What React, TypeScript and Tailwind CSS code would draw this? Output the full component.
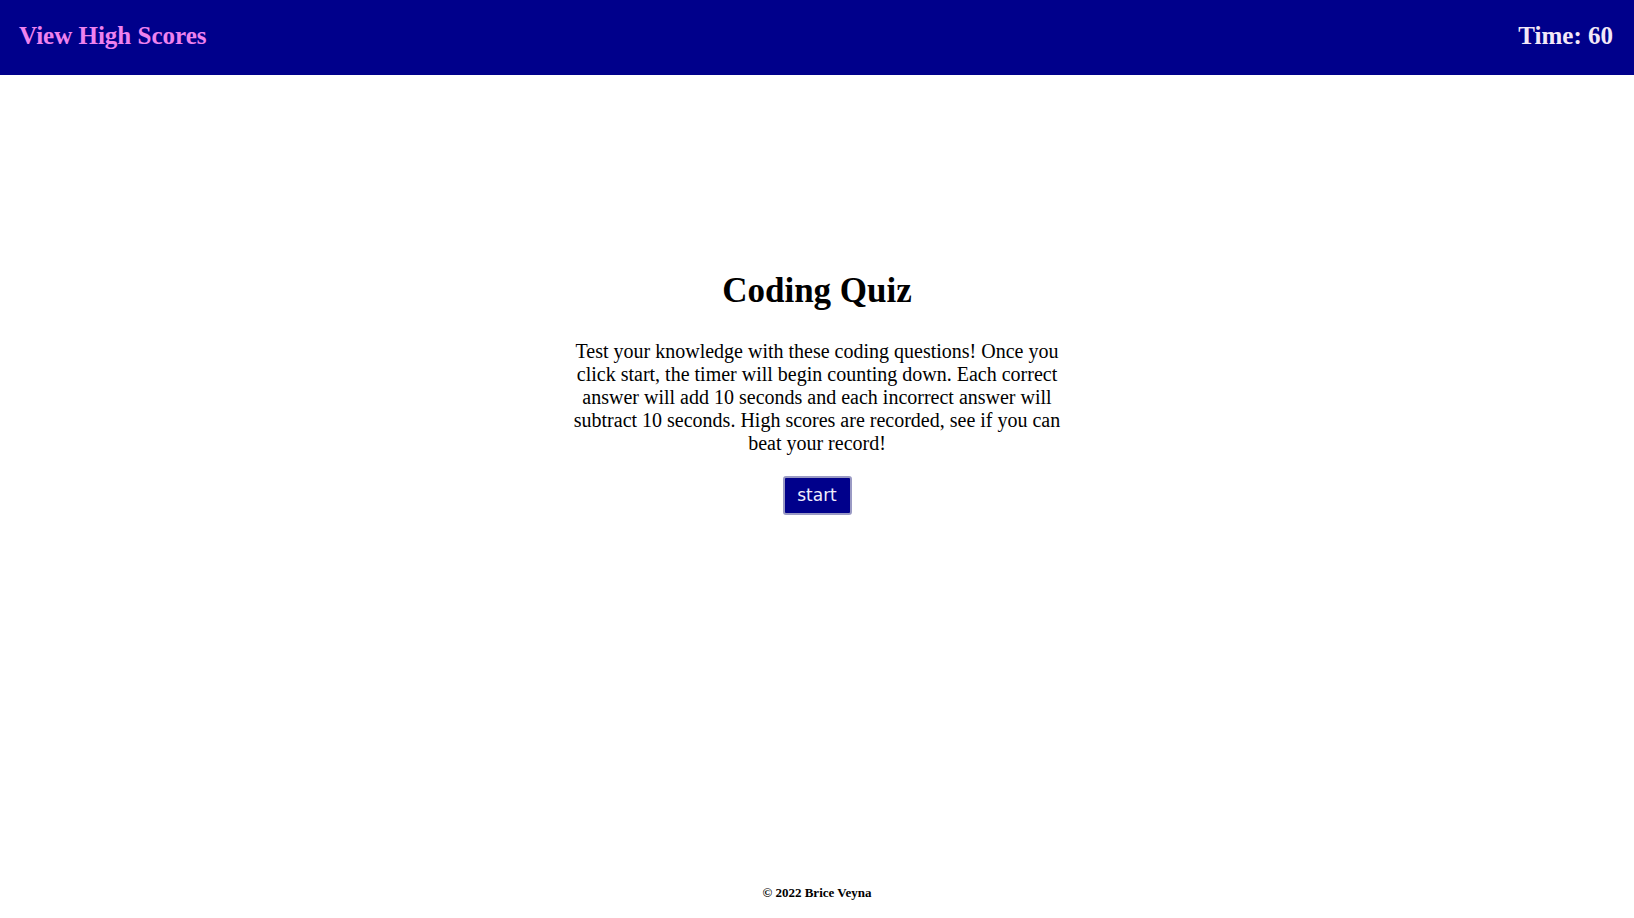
import React from "react";

export default function App() {
  return (
    <div className="min-h-screen flex flex-col bg-white text-black">
      <header className="h-[75px] bg-[#00008b] flex items-center justify-between pl-[19px] pr-[21px] pb-[4px] font-['Liberation_Serif',serif] font-bold text-[25px]">
        <a className="text-[#ee82ee] cursor-pointer">View High Scores</a>
        <span className="text-[#f3e8f7]">Time: 60</span>
      </header>
      <main className="flex flex-col items-center pt-[196px] font-['Liberation_Serif',serif]">
        <h1 className="text-[35px] font-bold leading-[40px]">Coding Quiz</h1>
        <p className="mt-[29px] w-[500px] text-center text-[20px] leading-[23px]">
          Test your knowledge with these coding questions! Once you click start, the timer will begin counting down. Each correct answer will add 10 seconds and each incorrect answer will subtract 10 seconds. High scores are recorded, see if you can beat your record!
        </p>
        <button className="mt-[21px] w-[69px] h-[39px] bg-[#00008b] text-[#f0eefc] border-2 border-[#9a9ac4] rounded-[3px] font-['DejaVu_Sans',sans-serif] text-[17px] leading-none">
          start
        </button>
      </main>
      <footer className="mt-auto pb-[16px] text-center font-['Liberation_Serif',serif] font-bold text-[13px]">
        © 2022 Brice Veyna
      </footer>
    </div>
  );
}
